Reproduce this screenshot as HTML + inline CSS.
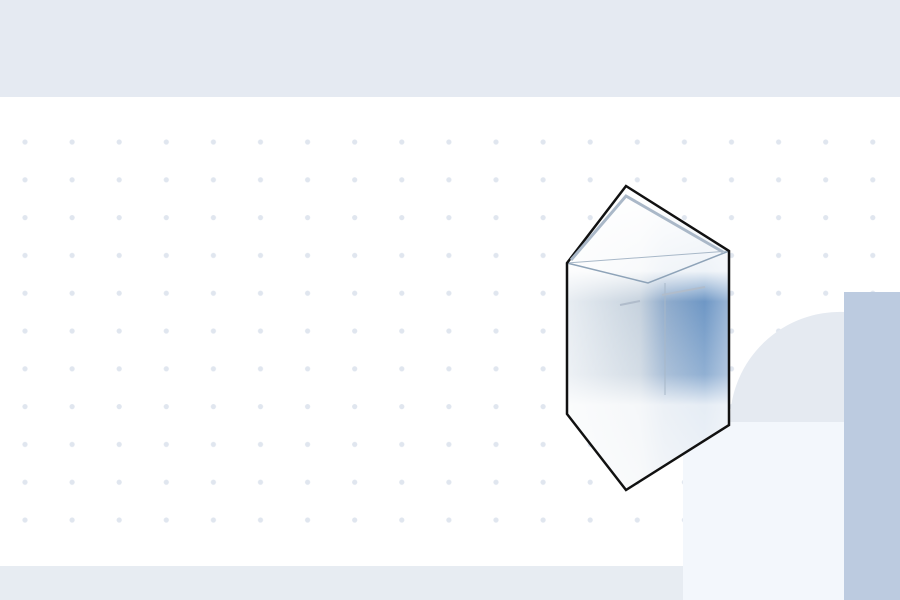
<!DOCTYPE html>
<html><head><style>
body{margin:0;width:900px;height:600px;overflow:hidden;background:#fff;position:relative;font-family:"Liberation Sans",sans-serif}
div{position:absolute}
</style></head><body>
<div style="left:0;top:0;width:900px;height:97px;background:#e5eaf2"></div>
<div style="left:0;top:566px;width:683px;height:34px;background:#e7ecf2"></div>
<svg style="position:absolute;left:0;top:0" width="900" height="600">
<defs>
<pattern id="d" x="1" y="123" width="47.1" height="37.8" patternUnits="userSpaceOnUse"><circle cx="24" cy="19" r="2.6" fill="#e0e6ef"/></pattern>
<linearGradient id="g" x1="0" y1="0" x2="1" y2="0"><stop offset="0" stop-color="#e4eaf0"/><stop offset=".45" stop-color="#bccad8"/><stop offset=".6" stop-color="#7f9fc4"/><stop offset=".85" stop-color="#5585bb"/><stop offset="1" stop-color="#8aaad0"/></linearGradient>
<linearGradient id="f" x1="0" y1="0" x2="0" y2="1"><stop offset="0" stop-color="#fff" stop-opacity="1"/><stop offset=".28" stop-color="#fff" stop-opacity=".9"/><stop offset=".38" stop-color="#fff" stop-opacity=".15"/><stop offset=".62" stop-color="#fff" stop-opacity=".35"/><stop offset=".72" stop-color="#fff" stop-opacity=".85"/><stop offset="1" stop-color="#fff" stop-opacity=".9"/></linearGradient>
</defs>
<rect x="0" y="120" width="900" height="420" fill="url(#d)"/>
<path d="M730 422 A110 110 0 0 1 845 312 L845 422Z" fill="#e5eaf1"/>
<rect x="683" y="422" width="162" height="178" fill="#f3f7fc"/>
<rect x="844" y="292" width="56" height="308" fill="#bccbe0"/>
<polygon points="626,186 729,251 729,425 626,490 567,414 567,263" fill="url(#g)"/>
<polygon points="626,186 729,251 729,425 626,490 567,414 567,263" fill="url(#f)"/>
<polyline points="567,263 648,283 729,251" fill="none" stroke="#8ea3b8" stroke-width="1.5"/>
<line x1="567" y1="263" x2="729" y2="251" stroke="#a8b8c8" stroke-width="1"/>
<line x1="665" y1="283" x2="665" y2="395" stroke="#a8b8c8" stroke-width="1"/>
<line x1="662" y1="295" x2="705" y2="287" stroke="#b0bccb" stroke-width="2"/>
<line x1="620" y1="305" x2="640" y2="301" stroke="#b0bccb" stroke-width="2"/>
<polygon points="626,186 729,251 729,425 626,490 567,414 567,263" fill="none" stroke="#111" stroke-width="2.5"/>
<polyline points="571,260 626,196 723,252" fill="none" stroke="#aab8c8" stroke-width="3"/>
</svg>
</body></html>
